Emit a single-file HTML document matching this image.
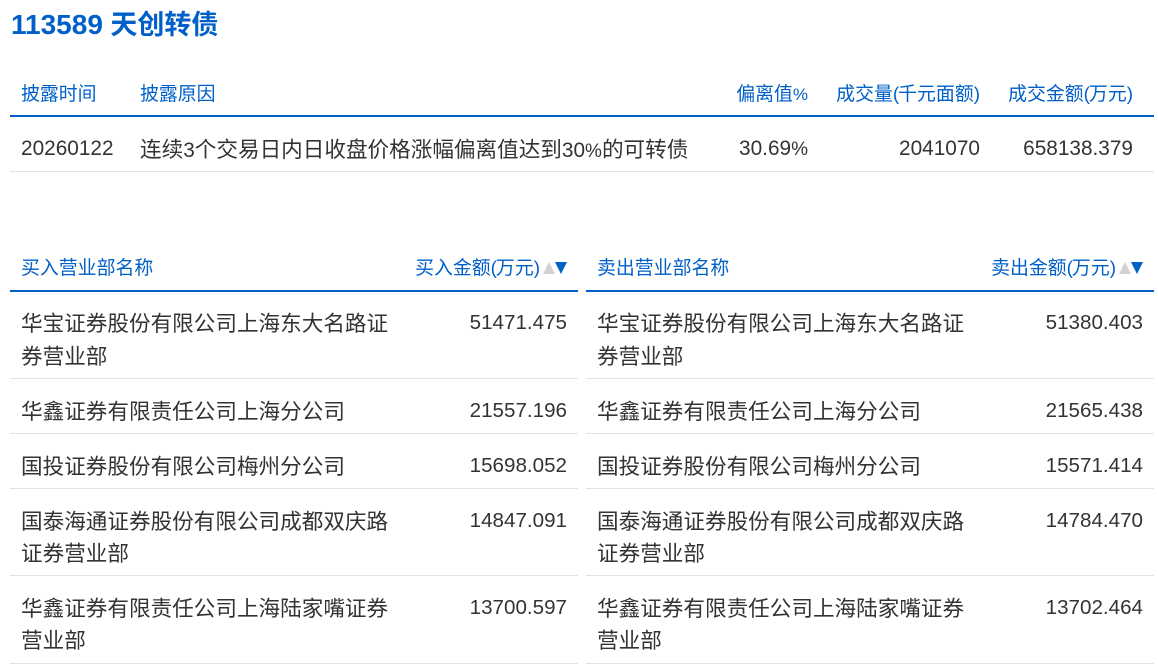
<!DOCTYPE html>
<html lang="zh-CN">
<head>
<meta charset="utf-8">
<style>
html,body{margin:0;padding:0;background:#fff;width:1158px;height:669px;overflow:hidden}
body{position:relative;font-family:"Liberation Sans","Noto Sans CJK SC",sans-serif;color:#333}
.t{position:absolute;white-space:nowrap;height:30px;line-height:30px;font-size:21.6px;margin-top:1px}
.r{text-align:right}
.h{font-size:18.9px;color:#0060c8;margin-top:2px}
.n{font-size:20.6px;margin-top:0}
.m{font-size:20.8px}
.p{letter-spacing:-1px}
.pc{font-size:17px}
.pn{font-size:19px}
.l{position:absolute;height:1px;background:#e2e2e2}
.b{position:absolute;height:2px;background:#0060c8}
svg{position:absolute}
</style>
</head>
<body>
<div class="t" style="left:11px;top:10px;font-size:27px;font-weight:bold;color:#0060c8;margin-top:0"><span style="font-size:28px">113589</span> 天创转债</div>

<div class="t h" style="left:21px;top:78px">披露时间</div>
<div class="t h" style="left:140px;top:78px">披露原因</div>
<div class="t h r" style="right:350px;top:78px">偏离值<span class="pc">%</span></div>
<div class="t h r" style="right:179px;top:78px">成交量<span class="p">(</span>千元面额<span class="p">)</span></div>
<div class="t h r" style="right:26px;top:78px">成交金额<span class="p">(</span>万元<span class="p">)</span></div>
<div class="b" style="left:10px;width:1144px;top:115px"></div>

<div class="t n m" style="left:21px;top:134px">20260122</div>
<div class="t" style="left:140px;top:134px;font-size:21.6px">连续<span class="n m">3</span>个交易日内日收盘价格涨幅偏离值达到<span class="n m">30<span class="pn">%</span></span>的可转债</div>
<div class="t n m r" style="right:350px;top:134px">30.69<span class="pn">%</span></div>
<div class="t n m r" style="right:178px;top:134px">2041070</div>
<div class="t n m r" style="right:25px;top:134px">658138.379</div>
<div class="l" style="left:10px;width:1144px;top:171px"></div>

<div class="t h" style="left:21px;top:252px">买入营业部名称</div>
<div class="t h r" style="right:619px;top:252px">买入金额<span class="p">(</span>万元<span class="p">)</span></div>
<svg style="left:543px;top:262px" width="24" height="12"><path d="M0 12L6 0L12 12Z" fill="#d2d2d2"/><path d="M12 0H24L18 12Z" fill="#0060c8"/></svg>
<div class="t h" style="left:597px;top:252px">卖出营业部名称</div>
<div class="t h r" style="right:43px;top:252px">卖出金额<span class="p">(</span>万元<span class="p">)</span></div>
<svg style="left:1119px;top:262px" width="24" height="12"><path d="M0 12L6 0L12 12Z" fill="#d2d2d2"/><path d="M12 0H24L18 12Z" fill="#0060c8"/></svg>
<div class="b" style="left:10px;width:568px;top:290px"></div>
<div class="b" style="left:586px;width:568px;top:290px"></div>

<div class="t" style="left:21px;top:308px">华宝证券股份有限公司上海东大名路证</div>
<div class="t" style="left:21px;top:341px">券营业部</div>
<div class="t n r" style="right:591px;top:308px">51471.475</div>
<div class="t" style="left:597px;top:308px">华宝证券股份有限公司上海东大名路证</div>
<div class="t" style="left:597px;top:341px">券营业部</div>
<div class="t n r" style="right:15px;top:308px">51380.403</div>
<div class="l" style="left:10px;width:568px;top:378px"></div>
<div class="l" style="left:586px;width:568px;top:378px"></div>

<div class="t" style="left:21px;top:396px">华鑫证券有限责任公司上海分公司</div>
<div class="t n r" style="right:591px;top:396px">21557.196</div>
<div class="t" style="left:597px;top:396px">华鑫证券有限责任公司上海分公司</div>
<div class="t n r" style="right:15px;top:396px">21565.438</div>
<div class="l" style="left:10px;width:568px;top:433px"></div>
<div class="l" style="left:586px;width:568px;top:433px"></div>

<div class="t" style="left:21px;top:451px">国投证券股份有限公司梅州分公司</div>
<div class="t n r" style="right:591px;top:451px">15698.052</div>
<div class="t" style="left:597px;top:451px">国投证券股份有限公司梅州分公司</div>
<div class="t n r" style="right:15px;top:451px">15571.414</div>
<div class="l" style="left:10px;width:568px;top:488px"></div>
<div class="l" style="left:586px;width:568px;top:488px"></div>

<div class="t" style="left:21px;top:506px">国泰海通证券股份有限公司成都双庆路</div>
<div class="t" style="left:21px;top:538px">证券营业部</div>
<div class="t n r" style="right:591px;top:506px">14847.091</div>
<div class="t" style="left:597px;top:506px">国泰海通证券股份有限公司成都双庆路</div>
<div class="t" style="left:597px;top:538px">证券营业部</div>
<div class="t n r" style="right:15px;top:506px">14784.470</div>
<div class="l" style="left:10px;width:568px;top:575px"></div>
<div class="l" style="left:586px;width:568px;top:575px"></div>

<div class="t" style="left:21px;top:593px">华鑫证券有限责任公司上海陆家嘴证券</div>
<div class="t" style="left:21px;top:625px">营业部</div>
<div class="t n r" style="right:591px;top:593px">13700.597</div>
<div class="t" style="left:597px;top:593px">华鑫证券有限责任公司上海陆家嘴证券</div>
<div class="t" style="left:597px;top:625px">营业部</div>
<div class="t n r" style="right:15px;top:593px">13702.464</div>
<div class="l" style="left:10px;width:568px;top:663px"></div>
<div class="l" style="left:586px;width:568px;top:663px"></div>
</body>
</html>
